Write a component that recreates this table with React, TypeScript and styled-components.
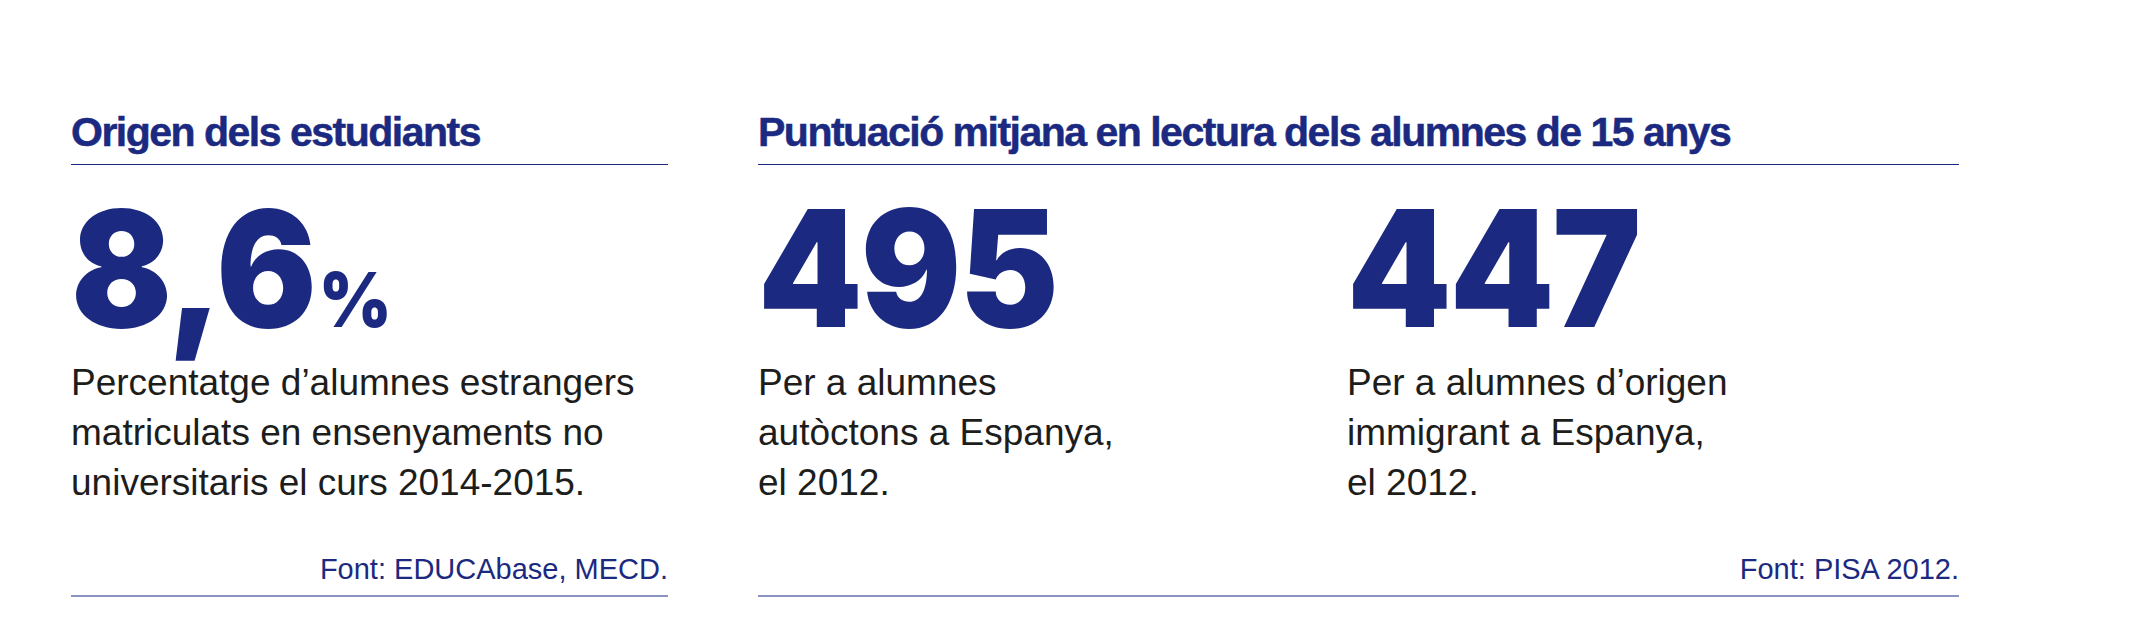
import React from "react";
import styled, { createGlobalStyle } from "styled-components";

const navy = "#1b2a80";

const GlobalStyle = createGlobalStyle`
  html, body {
    margin: 0;
    padding: 0;
    background: #ffffff;
  }
  body {
    font-family: "Liberation Sans", Arial, sans-serif;
    color: #1d1d1b;
  }
`;

const Page = styled.div`
  display: flex;
  gap: 90px;
  padding: 112px 0 0 71px;
  height: 642px;
  box-sizing: border-box;
`;

const Section = styled.section<{ $width: number }>`
  width: ${(p) => p.$width}px;
  display: flex;
  flex-direction: column;
`;

const Title = styled.h2`
  margin: 0;
  font-family: "Liberation Sans", Arial, sans-serif;
  font-weight: 700;
  font-size: 41px;
  line-height: 41px;
  letter-spacing: -1.5px;
  -webkit-text-stroke: 0.5px ${navy};
  color: ${navy};
  padding-bottom: 11px;
  border-bottom: 1px solid ${navy};
  white-space: nowrap;
`;

const Stats = styled.div<{ $cols: string }>`
  display: grid;
  grid-template-columns: ${(p) => p.$cols};
`;

const Stat = styled.div`
  display: flex;
  flex-direction: column;
`;

const BigNumber = styled.div`
  margin-top: 22px;
  font-family: Inter, "Liberation Sans", Arial, sans-serif;
  font-weight: 900;
  font-size: 162px;
  line-height: 162px;
  letter-spacing: -2px;
  color: ${navy};
  white-space: nowrap;
  transform: scaleX(0.92);
  transform-origin: left center;
`;

const Percent = styled.span`
  font-size: 76px;
  line-height: 1;
  letter-spacing: 0;
  margin-left: 4px;
`;

const Description = styled.p`
  margin: 9px 0 0;
  font-size: 37px;
  line-height: 50px;
  color: #1d1d1b;
`;

const Source = styled.div`
  margin-top: auto;
  margin-bottom: 45px;
  font-size: 29px;
  line-height: 35px;
  color: ${navy};
  text-align: right;
  padding-bottom: 8px;
  border-bottom: 2px solid #8b93c3;
`;

interface StatData {
  value: string;
  percent?: boolean;
  lines: string[];
}

const StatBlock = ({ value, percent, lines }: StatData) => (
  <Stat>
    <BigNumber>
      {value}
      {percent && <Percent>%</Percent>}
    </BigNumber>
    <Description>
      {lines.map((line, i) => (
        <React.Fragment key={i}>
          {line}
          {i < lines.length - 1 && <br />}
        </React.Fragment>
      ))}
    </Description>
  </Stat>
);

const App = () => {
  return (
    <>
      <GlobalStyle />
      <Page>
        <Section $width={597}>
          <Title>Origen dels estudiants</Title>
          <Stats $cols="1fr">
            <StatBlock
              value="8,6"
              percent
              lines={[
                "Percentatge d’alumnes estrangers",
                "matriculats en ensenyaments no",
                "universitaris el curs 2014-2015.",
              ]}
            />
          </Stats>
          <Source>Font: EDUCAbase, MECD.</Source>
        </Section>
        <Section $width={1201}>
          <Title>Puntuació mitjana en lectura dels alumnes de 15 anys</Title>
          <Stats $cols="589px 1fr">
            <StatBlock
              value="495"
              lines={["Per a alumnes", "autòctons a Espanya,", "el 2012."]}
            />
            <StatBlock
              value="447"
              lines={["Per a alumnes d’origen", "immigrant a Espanya,", "el 2012."]}
            />
          </Stats>
          <Source>Font: PISA 2012.</Source>
        </Section>
      </Page>
    </>
  );
};

export default App;
